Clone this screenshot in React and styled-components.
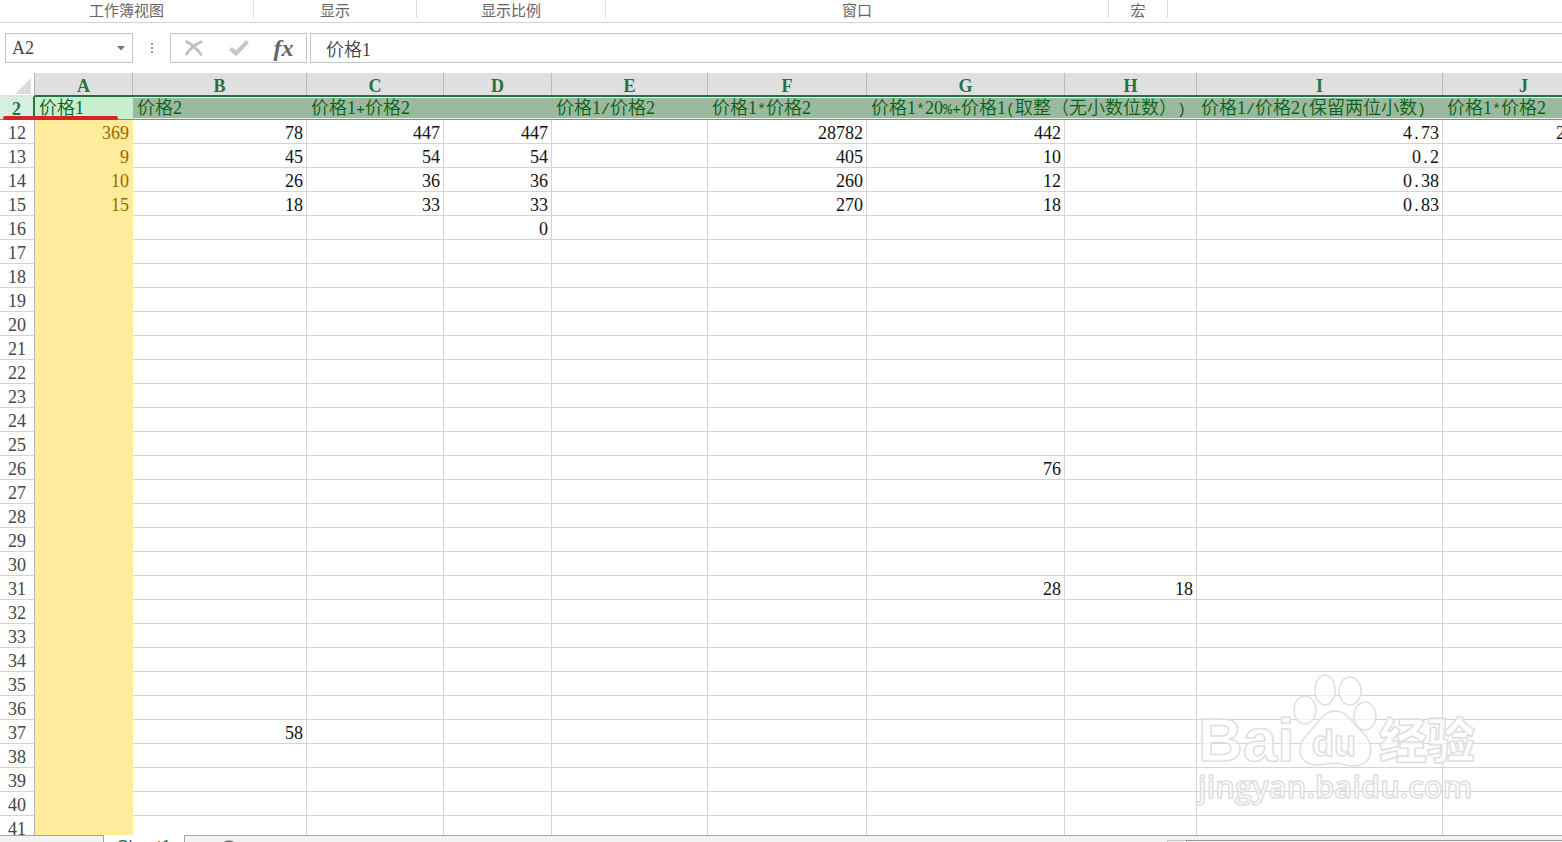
import React, { useState } from 'react'
import styled, { createGlobalStyle } from 'styled-components'

const GlobalStyle = createGlobalStyle`
  * {
    box-sizing: border-box;
  }
  body {
    margin: 0;
    overflow: hidden;
    background: #fff;
  }
`

const Page = styled.div`
  display: flex;
  flex-direction: column;
  height: 100vh;
  color: #111;
  font-family: 'Liberation Serif', 'Noto Sans CJK SC', serif;
  font-size: 18px;
  text-spacing-trim: space-all;
`

const Ribbon = styled.div`
  display: flex;
  align-items: flex-start;
  height: 23px;
  border-bottom: 1px solid #d4d4d4;
`

const Group = styled.div`
  width: ${props => props.$width}px;
  height: 18px;
  border-right: 1px solid #dcdcdc;
  color: #666;
  font-family: 'Noto Sans CJK SC', sans-serif;
  font-size: 15px;
  line-height: 20px;
  text-align: center;
`

const FormulaBar = styled.div`
  display: flex;
  height: 50px;
  padding: 10px 0 10px 5px;
`

const Box = styled.div`
  display: flex;
  align-items: center;
  border: 1px solid #c3c3c3;
`

const NameBox = styled(Box)`
  width: 128px;
`

const BarInput = styled.input`
  flex: 1;
  min-width: 0;
  height: 100%;
  padding: 0 0 0 ${props => props.$indent}px;
  border: none;
  outline: none;
  background: none;
  color: #444;
  font: inherit;
  font-weight: 350;
`

const BarButton = styled.button`
  display: flex;
  align-items: center;
  justify-content: center;
  width: ${props => props.$width}px;
  height: 100%;
  padding: 0;
  border: none;
  background: none;
  color: #666;
  font: italic bold 24px/24px 'Liberation Serif', serif;
`

const Dots = styled.div`
  display: flex;
  flex-direction: column;
  justify-content: center;
  align-items: center;
  gap: 2px;
  width: 37px;
`

const Dot = styled.i`
  width: 2px;
  height: 2px;
  background: #a0a0a0;
`

const Tools = styled(Box)`
  width: 137px;
  margin-right: 3px;
`

const FormulaBox = styled(Box)`
  flex: 1;
  border-right: none;
`

const SheetArea = styled.div`
  position: relative;
  flex: 1;
  min-height: 0;
  overflow: hidden;
`

const Grid = styled.table`
  width: 1605px;
  table-layout: fixed;
  border-collapse: separate;
  border-spacing: 0;
`

const Corner = styled.th`
  height: 22px;
  padding: 0 3px 1px 0;
  border-right: 1px solid #b5b5b5;
  vertical-align: bottom;
  svg {
    display: block;
    margin-left: auto;
  }
`

const ColHead = styled.th`
  height: 22px;
  padding: 4px 0 0;
  border-right: 1px solid #b9b9b9;
  background: #e0e0e0;
  color: #217346;
  line-height: 18px;
`

const RowHead = styled.th`
  height: 24px;
  padding: 3px 0 0;
  border-right: 1px solid #b5b5b5;
  border-bottom: 1px solid #d4d4d4;
  color: #444;
  font-weight: normal;
  line-height: 20px;
`

const ActiveRowHead = styled(RowHead)`
  height: 25px;
  padding-top: 2px;
  border-top: 2px solid #e0e0e0;
  border-right: 2px solid #217346;
  border-bottom-color: #888;
  background: #d3f0e0;
  color: #217346;
  font-weight: bold;
`

const TitleCell = styled.td`
  height: 25px;
  padding: 0 0 0 4px;
  border-top: 2px solid #217346;
  border-bottom: 1px solid #888;
  background: ${props => (props.$active ? '#c6efce' : '#9bb99f')};
  box-shadow: ${props => (props.$active ? 'none' : 'inset 0 1px #e4efe6, inset 0 -1px #e4efe6')};
  color: #0b5f14;
  font-weight: 350;
  line-height: 22px;
  white-space: nowrap;
`

const Cell = styled.td`
  height: 24px;
  padding: 3px 3px 0 0;
  border-right: 1px solid ${props => (props.$marked ? '#ffeb9c' : '#d4d4d4')};
  border-bottom: 1px solid ${props => (props.$marked ? '#ffeb9c' : '#d4d4d4')};
  background: ${props => (props.$marked ? '#ffeb9c' : '#fff')};
  color: ${props => (props.$marked ? '#9c6500' : '#111')};
  line-height: 20px;
  text-align: right;
`

const Sign = styled.span`
  font-family: 'Liberation Mono', monospace;
  font-size: 15px;
  line-height: 1;
`

const RedLine = styled.div`
  position: absolute;
  left: 3px;
  top: 43px;
  width: 115px;
  height: 4px;
  border-radius: 2px;
  background: #d62422;
`

const Watermark = styled.svg`
  position: absolute;
  left: 1190px;
  top: 597px;
  pointer-events: none;
`

const SheetBar = styled.div`
  display: flex;
  height: 7px;
  overflow: hidden;
`

const BarFill = styled.div`
  width: ${props => props.$width}px;
  flex: ${props => (props.$width ? 'none' : 1)};
  padding-left: 34px;
  border-top: 1px solid #a6a6a6;
  background: #f3f3f3;
`

const SheetTab = styled.button`
  width: 82px;
  height: 24px;
  padding: 0;
  border: 1px solid #a6a6a6;
  border-width: 0 1px;
  background: #fff;
  color: #217346;
  font: 17px/18px 'Liberation Sans', sans-serif;
`

const ScrollBar = styled.div`
  display: flex;
  width: 395px;
  padding-top: 4px;
  border-top: 1px solid #a6a6a6;
  background: #f3f3f3;
`

const ScrollArrow = styled.div`
  width: 19px;
  height: 20px;
  border: 1px solid #c8c8c8;
  border-right: none;
`

const Track = styled.div`
  flex: 1;
  height: 20px;
  border: 1px solid #999;
  border-right: none;
`

const groups = [
  ['工作簿视图', 254],
  ['显示', 163],
  ['显示比例', 189],
  ['窗口', 503],
  ['宏', 59],
]

const columns = [
  ['A', 98, '价格1'],
  ['B', 174, '价格2'],
  ['C', 137, '价格1+价格2'],
  ['D', 108, ''],
  ['E', 156, '价格1/价格2'],
  ['F', 159, '价格1*价格2'],
  ['G', 198, '价格1*20%+价格1(取整（无小数位数）)'],
  ['H', 132, ''],
  ['I', 246, '价格1/价格2(保留两位小数)'],
  ['J', 162, '价格1*价格2'],
]

const values = {
  12: { A: '369', B: '78', C: '447', D: '447', F: '28782', G: '442', I: '4.73', J: '28782' },
  13: { A: '9', B: '45', C: '54', D: '54', F: '405', G: '10', I: '0.2' },
  14: { A: '10', B: '26', C: '36', D: '36', F: '260', G: '12', I: '0.38' },
  15: { A: '15', B: '18', C: '33', D: '33', F: '270', G: '18', I: '0.83' },
  16: { D: '0' },
  26: { G: '76' },
  31: { G: '28', H: '18' },
  37: { B: '58' },
}

const rows = Array.from({ length: 30 }, (_, i) => i + 12)

// signs take the same half-width advance as the digits
function Text({ children = '' }) {
  return children.split(/([-+*/%().])/).map((part, i) => (i % 2 ? <Sign key={i}>{part}</Sign> : part))
}

function BaiduMark() {
  return (
    <Watermark width="300" height="150" viewBox="0 0 300 150" aria-hidden="true">
      <g fill="#fff" fillOpacity="0.7" stroke="#dedede" strokeWidth="1.5" strokeLinejoin="round">
        <text x="8" y="91" fontFamily="Liberation Sans" fontWeight="bold" fontSize="62">Bai</text>
        <ellipse cx="115" cy="40" rx="11" ry="14" />
        <ellipse cx="135" cy="20" rx="10" ry="15" />
        <ellipse cx="160" cy="21" rx="11" ry="14" />
        <ellipse cx="175" cy="46" rx="11" ry="14" />
        <path d="M145 41c-8 0-13 5-18 12-6 9-17 15-17 27 0 10 8 15 17 15 8 0 11-2 18-2s10 3 18 3c10 0 18-6 18-16 0-12-10-18-17-27-6-7-11-12-19-12z" />
        <text x="122" y="86" fontFamily="Liberation Sans" fontWeight="bold" fontSize="36">du</text>
        <text x="189" y="88" fontFamily="Noto Sans CJK SC" fontWeight="900" fontSize="48">经验</text>
        <text x="8" y="128" fontFamily="Open Sans" fontWeight="600" fontSize="31">jingyan.baidu.com</text>
      </g>
    </Watermark>
  )
}

export default function App() {
  const [cellName, setCellName] = useState('A2')
  const [formula, setFormula] = useState('价格1')

  return (
    <Page>
      <GlobalStyle />
      <Ribbon>
        {groups.map(([name, width]) => (
          <Group key={name} $width={width}>{name}</Group>
        ))}
      </Ribbon>

      <FormulaBar>
        <NameBox>
          <BarInput aria-label="名称框" $indent={6} value={cellName} onChange={e => setCellName(e.target.value)} />
          <BarButton $width={22} aria-label="展开名称">
            <svg width="8" height="5" viewBox="0 0 8 5"><path d="M0 0h8L4 4.5z" fill="#777" /></svg>
          </BarButton>
        </NameBox>
        <Dots><Dot /><Dot /><Dot /></Dots>
        <Tools>
          <BarButton $width={46} aria-label="取消">
            <svg width="18" height="16" viewBox="0 0 18 16">
              <path d="M1.5 1.5C6 4 12 9 16 14.5M16 2C11 4 5 9 1.5 14" fill="none" stroke="#c0c0c0" strokeWidth="2.8" strokeLinecap="round" />
            </svg>
          </BarButton>
          <BarButton $width={44} aria-label="输入">
            <svg width="20" height="16" viewBox="0 0 20 16">
              <path d="M1.5 8.5L7 13.5 18.5 1.5" fill="none" stroke="#c6c6c6" strokeWidth="4" />
            </svg>
          </BarButton>
          <BarButton $width={45} aria-label="插入函数">fx</BarButton>
        </Tools>
        <FormulaBox>
          <BarInput aria-label="编辑栏" $indent={15} value={formula} onChange={e => setFormula(e.target.value)} />
        </FormulaBox>
      </FormulaBar>

      <SheetArea>
        <Grid>
          <colgroup>
            <col width="35" />
            {columns.map(([name, width]) => <col key={name} width={width} />)}
          </colgroup>
          <thead>
            <tr>
              <Corner aria-label="全选">
                <svg width="16" height="16" viewBox="0 0 16 16"><path d="M16 0v16H0z" fill="#dcdcdc" /></svg>
              </Corner>
              {columns.map(([name]) => <ColHead key={name} scope="col">{name}</ColHead>)}
            </tr>
          </thead>
          <tbody>
            <tr>
              <ActiveRowHead scope="row">2</ActiveRowHead>
              {columns.filter(([name]) => name !== 'D' && name !== 'H').map(([name, , title]) => (
                <TitleCell key={name} $active={name === 'A'} colSpan={name === 'C' || name === 'G' ? 2 : 1}>
                  <Text>{title}</Text>
                </TitleCell>
              ))}
            </tr>
            {rows.map(row => (
              <tr key={row}>
                <RowHead scope="row">{row}</RowHead>
                {columns.map(([name]) => (
                  <Cell key={name} $marked={name === 'A'}>
                    <Text>{values[row]?.[name]}</Text>
                  </Cell>
                ))}
              </tr>
            ))}
          </tbody>
        </Grid>
        <RedLine />
        <BaiduMark />
      </SheetArea>

      <SheetBar>
        <BarFill $width={103} />
        <SheetTab>Sheet1</SheetTab>
        <BarFill>
          <svg width="20" height="20" viewBox="0 0 20 20">
            <circle cx="10" cy="13" r="8" fill="none" stroke="#777" strokeWidth="1.5" />
          </svg>
        </BarFill>
        <ScrollBar><ScrollArrow /><Track /></ScrollBar>
      </SheetBar>
    </Page>
  )
}
